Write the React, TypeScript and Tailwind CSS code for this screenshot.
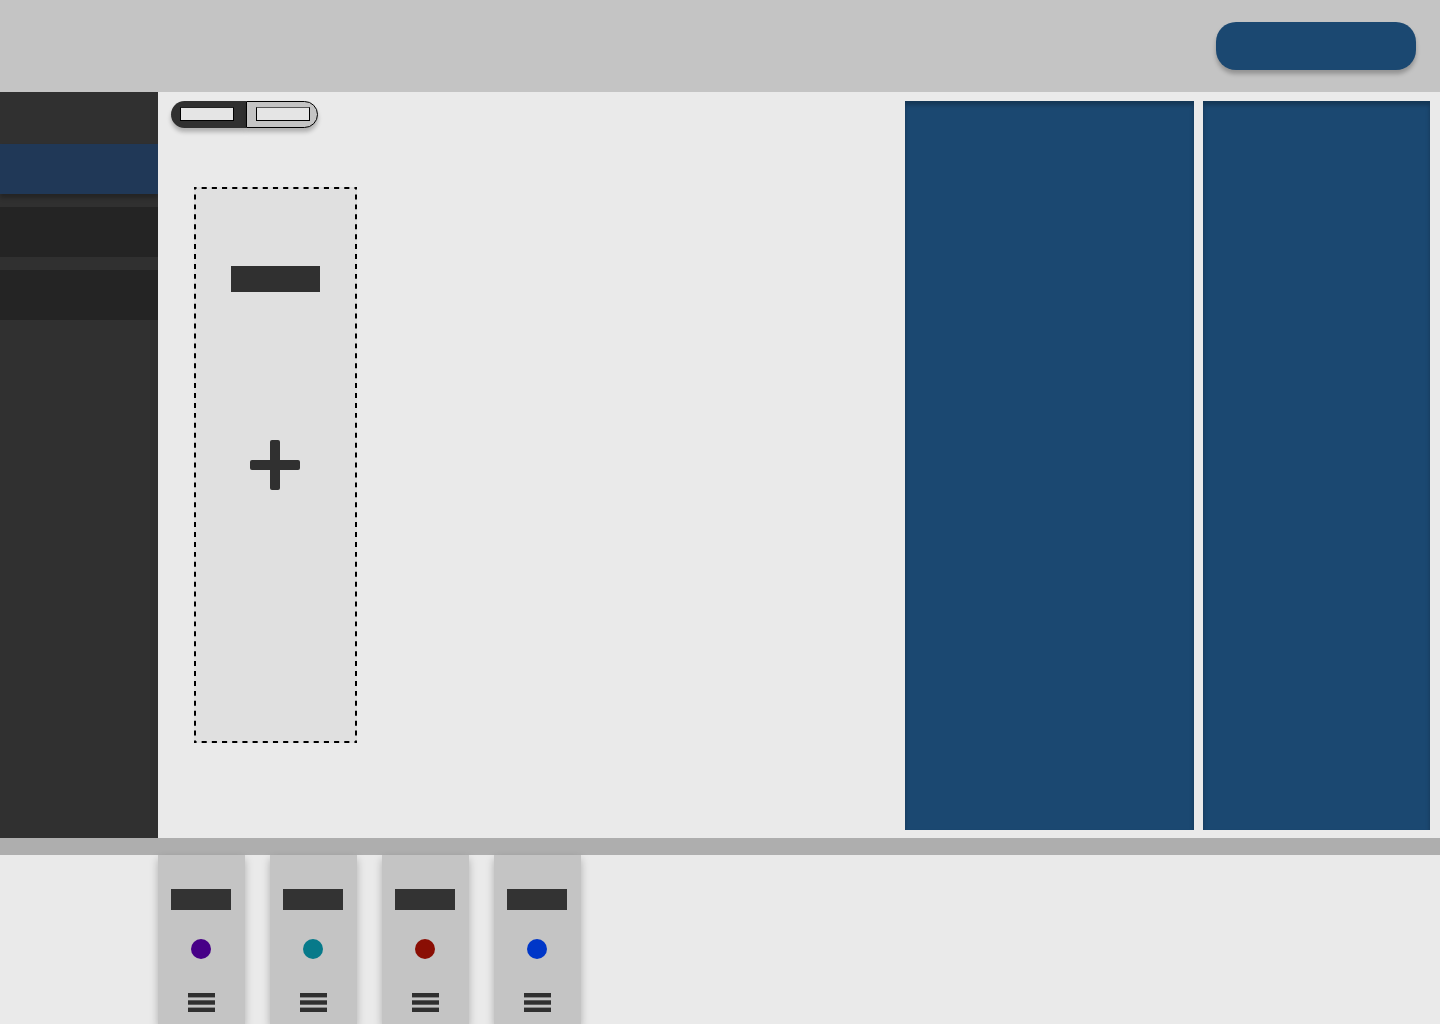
const navItems = [
  { label: "Section 1", tone: "relative bg-[#203857] shadow-[0_4px_4px_rgba(0,0,0,0.25)]", active: true },
  { label: "Section 2", tone: "bg-[#242424]", active: false },
  { label: "Section 3", tone: "bg-[#242424]", active: false },
];

const trayCards = [
  { label: "Purple", dot: "bg-[#470087]" },
  { label: "Teal", dot: "bg-[#077a8a]" },
  { label: "Red", dot: "bg-[#8a0e04]" },
  { label: "Blue", dot: "bg-[#0037c8]" },
];

function DashedOutline() {
  return (
    <svg className="pointer-events-none absolute inset-0 h-full w-full overflow-hidden" stroke="#000" strokeWidth="4" strokeDasharray="10 10" strokeDashoffset="5" aria-hidden="true">
      <line x1="0" y1="0" x2="100%" y2="0" pathLength={320} />
      <line x1="0" y1="100%" x2="100%" y2="100%" pathLength={320} />
      <line x1="0" y1="0" x2="0" y2="100%" pathLength={1120} />
      <line x1="100%" y1="0" x2="100%" y2="100%" pathLength={1120} />
    </svg>
  );
}

function PlusIcon() {
  return (
    <svg width="50" height="50" viewBox="0 0 50 50" fill="#303030" aria-hidden="true">
      <rect x="20" width="10" height="50" rx="2" />
      <rect y="20" width="50" height="10" rx="2" />
    </svg>
  );
}

function MenuIcon() {
  return (
    <svg width="28" height="19" viewBox="0 0 28 19" fill="#303030" aria-hidden="true">
      <rect x="1" y="0" width="27" height="4.4" />
      <rect x="1" y="7.3" width="27" height="4.4" />
      <rect x="1" y="14.6" width="27" height="4.4" />
    </svg>
  );
}

function ToggleLabel({ tone }: { tone: string }) {
  return <span className={`mb-px h-3.5 w-[54px] border border-black bg-[#e5e5e5] ${tone}`} />;
}

export default function App() {
  return (
    <div className="flex min-h-screen flex-col overflow-hidden bg-[#eaeaea]">
      <header className="flex h-[92px] shrink-0 items-center justify-end bg-[#c4c4c4] px-6">
        <button type="button" aria-label="Primary action" className="h-12 w-[200px] rounded-[20px] bg-[#1b4871] shadow-[0_4px_4px_rgba(0,0,0,0.25)]" />
      </header>

      <div className="flex flex-1">
        <nav aria-label="Sections" className="flex w-[158px] shrink-0 flex-col gap-[13px] overflow-hidden bg-[#303030] pt-[52px]">
          {navItems.map((item) => (
            <button key={item.label} type="button" aria-label={item.label} aria-current={item.active ? "page" : undefined} className={`h-[50px] w-full ${item.tone}`} />
          ))}
        </nav>

        <main className="flex flex-1 flex-col items-start pt-[9px] pb-[95px] pl-[13px]">
          <div role="group" aria-label="View" className="flex h-[27px]">
            <button type="button" aria-label="First view" aria-pressed="true" className="flex w-[75px] items-center rounded-l-full bg-[#303030] pl-[9px] shadow-[0_4px_4px_rgba(0,0,0,0.25)]">
              <ToggleLabel tone="border-t-[#222222]" />
            </button>
            <button type="button" aria-label="Second view" aria-pressed="false" className="flex w-[72px] items-center rounded-r-full border border-black bg-[#c4c4c4] pl-[9px] shadow-[0_4px_4px_rgba(0,0,0,0.25)]">
              <ToggleLabel tone="border-t-[#555555]" />
            </button>
          </div>

          <button type="button" aria-label="Add item" className="relative mt-[59px] ml-[23px] flex w-[163px] flex-1 flex-col items-center bg-[#e0e0e0] pt-[79px]">
            <DashedOutline />
            <span className="h-[26px] w-[89px] bg-[#303030]" />
            <span className="mt-[148px] mr-px">
              <PlusIcon />
            </span>
          </button>
        </main>

        <div className="flex gap-[9px] pt-[9px] pr-2.5 pb-2">
          <section aria-label="Details" className="w-[289px] bg-[#1b4871] shadow-[inset_0_4px_4px_rgba(0,0,0,0.25)]" />
          <aside aria-label="Summary" className="w-[227px] bg-[#1b4871] shadow-[inset_0_4px_4px_rgba(0,0,0,0.25)]" />
        </div>
      </div>

      <div className="h-[17px] shrink-0 bg-[#aeaeae]" />

      <footer className="flex h-[169px] shrink-0 gap-[25px] pl-[158px]">
        {trayCards.map((card) => (
          <article key={card.label} aria-label={card.label} className="flex w-[87px] flex-col items-center bg-[#c4c4c4] pt-[34px] pr-px shadow-[0_4px_8px_rgba(0,0,0,0.25)]">
            <span className="h-[21px] w-[60px] bg-[#333333]" />
            <span className={`mt-[29px] size-5 rounded-full ${card.dot}`} />
            <button type="button" aria-label={`${card.label} menu`} className="mt-[34px]">
              <MenuIcon />
            </button>
          </article>
        ))}
      </footer>
    </div>
  );
}
